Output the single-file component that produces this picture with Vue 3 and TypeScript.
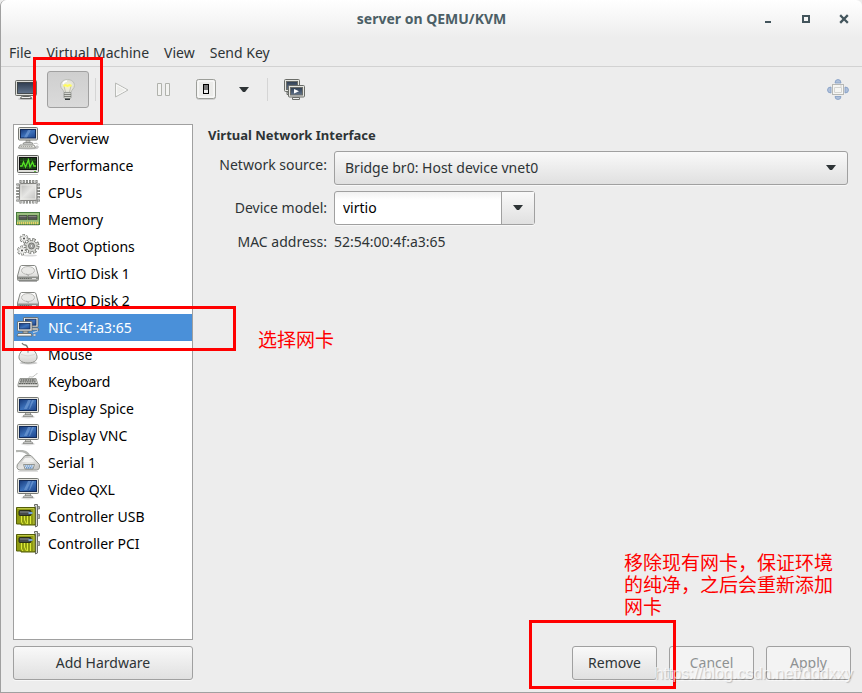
<script setup lang="ts">
import { ref } from 'vue'

interface Device {
  label: string
  icon: string
}

const menus: string[] = ['File', 'Virtual Machine', 'View', 'Send Key']

const devices: Device[] = [
  { label: 'Overview', icon: 'computer' },
  { label: 'Performance', icon: 'performance' },
  { label: 'CPUs', icon: 'cpu' },
  { label: 'Memory', icon: 'memory' },
  { label: 'Boot Options', icon: 'gears' },
  { label: 'VirtIO Disk 1', icon: 'disk' },
  { label: 'VirtIO Disk 2', icon: 'disk' },
  { label: 'NIC :4f:a3:65', icon: 'network' },
  { label: 'Mouse', icon: 'mouse' },
  { label: 'Keyboard', icon: 'keyboard' },
  { label: 'Display Spice', icon: 'display' },
  { label: 'Display VNC', icon: 'display' },
  { label: 'Serial 1', icon: 'serial' },
  { label: 'Video QXL', icon: 'display' },
  { label: 'Controller USB', icon: 'card' },
  { label: 'Controller PCI', icon: 'card' },
]

const selected = ref(7)
const source = ref('Bridge br0: Host device vnet0')
const model = ref('virtio')
</script>

<template>
  <div class="window">
    <svg class="sprite" width="0" height="0" aria-hidden="true">
      <defs>
        <linearGradient id="g-blue" x1="0" y1="0" x2="1" y2="1">
          <stop offset="0" stop-color="#16397a" />
          <stop offset="0.5" stop-color="#3d72bb" />
          <stop offset="1" stop-color="#1b438a" />
        </linearGradient>
        <linearGradient id="g-slate" x1="0" y1="0" x2="0" y2="1">
          <stop offset="0" stop-color="#2f3d50" />
          <stop offset="1" stop-color="#62748c" />
        </linearGradient>
        <linearGradient id="g-metal" x1="0" y1="0" x2="1" y2="1">
          <stop offset="0" stop-color="#b4b4b2" />
          <stop offset="0.5" stop-color="#e6e6e4" />
          <stop offset="1" stop-color="#bcbcba" />
        </linearGradient>
        <linearGradient id="g-light" x1="0" y1="0" x2="0" y2="1">
          <stop offset="0" stop-color="#ffffff" />
          <stop offset="1" stop-color="#d0d0cd" />
        </linearGradient>
        <radialGradient id="g-bulb">
          <stop offset="0" stop-color="#f8f5bd" />
          <stop offset="0.6" stop-color="#eae9d8" />
          <stop offset="1" stop-color="#dcdcda" />
        </radialGradient>
      </defs>

      <symbol id="display" viewBox="0 0 24 24">
        <ellipse cx="12" cy="21" rx="7" ry="1.5" fill="#000" opacity="0.12" />
        <path d="M10 16h4l1 3H9z" fill="#c8c8c4" stroke="#777974" stroke-width="0.7" />
        <path d="M7 20.5q0-1.5 2-1.5h6q2 0 2 1.5z" fill="#eee" stroke="#777974" stroke-width="0.7" />
        <rect x="1.5" y="1.5" width="21" height="15" rx="1" fill="#e4e4df" stroke="#777974" />
        <rect x="3.5" y="3.5" width="17" height="11" fill="url(#g-blue)" stroke="#122a58" />
        <path d="M12 4h3l-4 9H8zM16 4h2l-4 9h-1z" fill="#8fb4e5" opacity="0.45" />
      </symbol>

      <symbol id="computer" viewBox="0 0 24 24">
        <ellipse cx="12" cy="22.5" rx="10" ry="1.2" fill="#000" opacity="0.15" />
        <path d="M10 14h4v3h-4z" fill="#c8c8c4" stroke="#888" stroke-width="0.6" />
        <path d="M7 18q0-1.5 2-1.5h6q2 0 2 1.5z" fill="#eee" stroke="#777974" stroke-width="0.7" />
        <rect x="2.5" y="1.5" width="19" height="12.500" rx="1" fill="#e4e4df" stroke="#777974" />
        <rect x="4.5" y="3.5" width="15" height="8.500" fill="url(#g-blue)" stroke="#122a58" />
        <path d="M12 4h3l-4 7.5H8z" fill="#8fb4e5" opacity="0.45" />
        <path d="M4 19h14l1.5 3h-17z" fill="#f3f3ef" stroke="#777974" stroke-width="0.8" />
        <path d="M4.5 20.500h12.500" stroke="#a5a5a0" stroke-dasharray="1.5 0.6" />
        <path d="M18 17.500q4-1 4 1" fill="none" stroke="#aaa" stroke-width="0.7" />
        <ellipse cx="21" cy="21" rx="1.4" ry="1" fill="#fff" stroke="#888" stroke-width="0.6" />
      </symbol>

      <symbol id="performance" viewBox="0 0 24 24">
        <path d="M2 21.500h20" stroke="#000" opacity="0.2" />
        <rect x="1.5" y="2.5" width="21" height="17" rx="1" fill="#deded9" stroke="#5c5e5a" />
        <rect x="3.5" y="4.5" width="17" height="12" fill="#173d12" stroke="#111" />
        <path d="M4 7.5h16M4 10.5h16M4 13.5h16M7.5 5v11M11.5 5v11M15.5 5v11" stroke="#2f6126" stroke-width="0.5" />
        <path d="M4 13h2l1.500-4 2 5 3-7 1.500 7 2.500-5 1.500 4H20" fill="none" stroke="#55e324" stroke-width="1.3" />
        <path d="M18 18.5h2" stroke="#67bd46" />
      </symbol>

      <symbol id="cpu" viewBox="0 0 24 24">
        <path d="M3.500 1.5h18M3.500 22h18" stroke="#6c6e6a" stroke-width="3" stroke-dasharray="2 1.2" />
        <path d="M1.8 3.500v18M22.5 3.500v18" stroke="#6c6e6a" stroke-width="3" stroke-dasharray="2 1.2" />
        <path d="M4.200 1.5h17M4.200 22h17" stroke="#d0d1ce" stroke-width="2" stroke-dasharray="0.700 2.500" />
        <path d="M1.8 4.200v17M22.5 4.200v17" stroke="#d0d1ce" stroke-width="2" stroke-dasharray="0.700 2.500" />
        <rect x="3.5" y="3.5" width="17.5" height="17" rx="1" fill="url(#g-metal)" stroke="#858582" />
        <rect x="5" y="5" width="14.5" height="14" fill="none" stroke="#efefec" stroke-width="0.7" />
      </symbol>

      <symbol id="memory" viewBox="0 0 24 24">
        <rect x="0.5" y="5.5" width="23" height="12" fill="#7eaa62" stroke="#477b3c" />
        <path d="M1 7h22" stroke="#b8d39b" />
        <path d="M3 8.500h8v4H3zM12 8.500h9v4h-9z" fill="#555753" stroke="#32362f" stroke-width="0.5" />
        <path d="M3.5 9.500h7M12.5 9.500h8" stroke="#81837e" />
        <path d="M1 14h22" stroke="#a8cd90" />
        <path d="M1 16h22" stroke="#e7d367" stroke-width="2.5" stroke-dasharray="1.3 0.7" />
        <path d="M1 18.500h22" stroke="#000" opacity="0.15" />
      </symbol>

      <symbol id="gears" viewBox="0 0 24 24">
        <ellipse cx="14" cy="21.5" rx="7" ry="1" fill="#000" opacity="0.15" />
        <g fill="none">
          <circle cx="15.5" cy="12" r="6" stroke="#6e706b" stroke-width="4" stroke-dasharray="3 1.712" />
          <circle cx="15.5" cy="12" r="5.5" fill="#d8d9d5" stroke="#6e706b" stroke-width="0.8" />
          <circle cx="15.5" cy="12" r="5.800" stroke="#d8d9d5" stroke-width="3" stroke-dasharray="1.600 2.955" stroke-dashoffset="-0.700" />
          <circle cx="8" cy="4.500" r="3" stroke="#6e706b" stroke-width="3" stroke-dasharray="2 1.140" />
          <circle cx="8" cy="4.500" r="2.800" fill="#f4f4f2" stroke="#8a8c87" stroke-width="0.5" />
          <circle cx="8" cy="4.500" r="3" stroke="#f4f4f2" stroke-width="1.800" stroke-dasharray="1 2.140" stroke-dashoffset="-0.500" />
          <circle cx="6" cy="16.5" r="3.300" stroke="#6e706b" stroke-width="3.200" stroke-dasharray="2.200 1.255" />
          <circle cx="6" cy="16.5" r="3" fill="#f4f4f2" stroke="#8a8c87" stroke-width="0.5" />
          <circle cx="6" cy="16.5" r="3.300" stroke="#f4f4f2" stroke-width="2" stroke-dasharray="1.200 2.255" stroke-dashoffset="-0.500" />
        </g>
        <circle cx="15.5" cy="12" r="3" fill="#aaaca7" stroke="#555" stroke-width="0.7" />
        <circle cx="15.5" cy="12" r="1.2" fill="#fff" stroke="#666" stroke-width="0.5" />
        <circle cx="8" cy="4.500" r="0.900" fill="#333" />
        <circle cx="6" cy="16.5" r="0.900" fill="#333" />
      </symbol>

      <symbol id="disk" viewBox="0 0 24 24">
        <path d="M5.5 4.500h13q1 0 1.500 1.500l2.500 9v3.500q0 1-1 1h-19q-1 0-1-1V15L4 6q0.500-1.500 1.500-1.500z" fill="url(#g-light)" stroke="#868884" />
        <path d="M2 15.5h20v3H2z" fill="#8e908c" />
        <ellipse cx="12" cy="9.5" rx="6.5" ry="4" fill="#e9e9e7" stroke="#babab7" />
        <path d="M10 13l3 2" stroke="#aaa" />
        <path d="M4 17.5h9" stroke="#6a6c68" stroke-dasharray="1 1" />
        <path d="M16 17.5h4" stroke="#dedede" />
        <path d="M3 20.5h18" stroke="#000" opacity="0.3" />
      </symbol>

      <symbol id="network" viewBox="0 0 24 24">
        <g stroke="#60625e" stroke-width="0.8">
          <path d="M13 13h9l1 2h-10z" fill="#f1f1ed" />
          <rect x="7.5" y="2.5" width="14.5" height="9.5" rx="0.5" fill="#eeeeea" />
          <rect x="9.5" y="4.200" width="10.5" height="6" fill="url(#g-blue)" stroke="#142d5c" />
          <path d="M7 16h5v2H7z" fill="#ddd" />
          <path d="M2 18.500h13l1 2.500H1z" fill="#f6f6f2" />
          <rect x="1.5" y="6.5" width="14.5" height="9.5" rx="0.5" fill="#eeeeea" />
          <rect x="3.5" y="8.5" width="10.5" height="5.5" fill="url(#g-blue)" stroke="#142d5c" />
        </g>
        <path d="M17 17.5q5-1 5-2" stroke="#ddd" fill="none" />
        <ellipse cx="18.5" cy="20" rx="1.5" ry="1" fill="#eee" stroke="#777" stroke-width="0.5" />
      </symbol>

      <symbol id="mouse" viewBox="0 0 24 24">
        <ellipse cx="12.5" cy="21" rx="9" ry="1.5" fill="#000" opacity="0.2" />
        <path d="M6 1q1 2 3 2t3 4" fill="none" stroke="#777974" stroke-width="1.3" />
        <path d="M12 6.500c4 0 7 2 8.500 6 2 5-1.500 8.500-8.500 8.500S1.500 17.500 3.500 12.500C5 8.500 8 6.500 12 6.500z" fill="url(#g-light)" stroke="#8e908b" />
        <path d="M5 12.500q7 3 14 0" stroke="#d2d2ce" fill="none" stroke-width="0.8" />
        <ellipse cx="12" cy="9.500" rx="1" ry="1.800" fill="#bbb" />
      </symbol>

      <symbol id="keyboard" viewBox="0 0 24 24">
        <path d="M13 10c0-5 2 0 5-3s3-1 3-3" fill="none" stroke="#b9bab7" stroke-width="0.9" />
        <path d="M4 9.500h16l2 6v2h-20v-2z" fill="#e0e0dd" stroke="#8c8e89" stroke-width="0.9" />
        <path d="M4.5 11h15M4 12.800h16M3 14.600h18" stroke="#5e605c" stroke-width="1.3" stroke-dasharray="1.9 0.4" />
        <path d="M2 18h20" stroke="#000" opacity="0.2" />
      </symbol>

      <symbol id="serial" viewBox="0 0 24 24">
        <path d="M0 1c8-1 13 2 13 6" fill="none" stroke="#b4b6b2" stroke-width="2.300" />
        <path d="M9 5.500h6l7 7.500q2 1 1.500 4.500-0.500 2.500-3 2.500H4q-2.500 0-3-2.500Q0.500 14.500 3 12.500z" fill="url(#g-metal)" stroke="#92948f" />
        <path d="M9 8h6l3 4H6z" fill="#f2f2f0" />
        <path d="M7.500 14.500h11l-1.500 4.500H9z" fill="#dce5ee" stroke="#7e817c" stroke-width="0.8" />
        <path d="M9 16h8M10 17.800h6.500" stroke="#4b83c3" stroke-width="1.2" stroke-dasharray="1.3 0.6" />
        <path d="M2 21.500h20" stroke="#000" opacity="0.12" />
      </symbol>

      <symbol id="card" viewBox="0 0 24 24">
        <path d="M18.500 2V0.500h3V22l-2 1V3z" fill="#d3d5d0" stroke="#6a6c67" />
        <path d="M21.500 2.500h2v2.500h-2zM21.500 10.500h2v4h-2z" fill="#b2b4af" stroke="#6a6c67" stroke-width="0.7" />
        <path d="M0.5 3.500h18.500v17.500h-14v-1h-4.500z" fill="#8e9a12" stroke="#535d08" />
        <path d="M1.5 4.500h16.500v15.500" stroke="#bdc646" fill="none" />
        <path d="M5.5 12v6l1.500 2M8.5 12v4l2 4M11.500 12v8M14.5 12v8" stroke="#dcea38" stroke-width="1" fill="none" />
        <rect x="3" y="6.500" width="12" height="5" rx="1" fill="#45494b" stroke="#282e17" />
        <path d="M4 8h9" stroke="#84898b" />
        <path d="M12.500 9h4" stroke="#74a2d4" stroke-width="2" />
      </symbol>

      <symbol id="console" viewBox="0 0 24 24">
        <ellipse cx="12" cy="21" rx="8" ry="1" fill="#000" opacity="0.2" />
        <path d="M10 17h4v2h-4z" fill="#999" />
        <path d="M6.5 20.500q0-2 2-2h7q2 0 2 2z" fill="#f2f2ef" stroke="#555753" stroke-width="0.9" />
        <rect x="1.5" y="2.500" width="21" height="15" rx="1" fill="#ddded9" stroke="#6a6c68" />
        <rect x="3.5" y="4.500" width="17" height="11" fill="url(#g-slate)" stroke="#2e3436" stroke-width="0.8" />
      </symbol>

      <symbol id="bulb" viewBox="0 0 24 24">
        <path d="M11.500 1.500c4 0 7 2.500 7 6 0 3-3 4-3.500 7H8c-0.500-3-3.500-4-3.500-7 0-3.500 3-6 7-6z" fill="url(#g-bulb)" stroke="#bcbeb8" />
        <path d="M7 6q1-3 4-3" fill="none" stroke="#fff" stroke-width="1.300" />
        <path d="M9.500 14L8 8M13.500 14l1.500-6" fill="none" stroke="#b9b9aa" stroke-width="0.8" />
        <path d="M7.500 8l2-1 2 1 2-1 2 1" fill="none" stroke="#fffb5c" stroke-width="2" />
        <path d="M8 14.500h7v5l-1.500 1.500h-4L8 19.500z" fill="#d4d6d1" stroke="#8c8e89" stroke-width="0.8" />
        <path d="M8 16.500h7M8 18.500h7" stroke="#777974" stroke-width="0.9" />
        <path d="M9 20.500h5v1.500H9z" fill="#2e3436" />
      </symbol>

      <symbol id="play" viewBox="0 0 24 24">
        <path d="M5.500 5v14L18 12z" fill="#ededea" stroke="#b9bbb7" stroke-linejoin="round" />
        <path d="M6.700 7v10L16 12z" fill="none" stroke="#fafafa" />
      </symbol>

      <symbol id="pause" viewBox="0 0 24 24">
        <path d="M5.500 5.500h4v12h-4zM13.500 5.500h4v12h-4z" fill="#f3f3f1" stroke="#b0b2ac" />
      </symbol>

      <symbol id="power" viewBox="0 0 24 24">
        <rect x="2.5" y="2.5" width="19" height="19" rx="2" fill="none" stroke="#000" opacity="0.12" />
        <rect x="2.5" y="1.5" width="19" height="19" rx="2" fill="#ececea" stroke="#9c9e99" />
        <rect x="4" y="3" width="16" height="16" rx="1" fill="none" stroke="#fff" />
        <rect x="9.5" y="6.5" width="5" height="9" fill="#eee" stroke="#000" />
        <path d="M10 7h4v5h-4z" fill="#777" />
      </symbol>

      <symbol id="arrow" viewBox="0 0 10 6">
        <path d="M0 0h10L6 5H4z" fill="#2e3436" />
      </symbol>

      <symbol id="snapshots" viewBox="0 0 24 24">
        <g stroke="#6a6c68">
          <path d="M5 14h6v2.500H5z" fill="#ddd" />
          <rect x="2.500" y="1.500" width="15" height="12" rx="1" fill="#e4e5e1" />
          <rect x="4.500" y="3.500" width="11" height="8" fill="url(#g-slate)" />
          <path d="M10.5 21.500v-2h7v2z" fill="#eee" />
          <rect x="6.500" y="7.500" width="16" height="11.500" rx="1" fill="#e4e5e1" />
          <rect x="8.500" y="9.500" width="12" height="7.500" fill="url(#g-slate)" />
        </g>
        <path d="M12 11v4.500l5-2.250z" fill="#fff" />
      </symbol>

      <symbol id="fullscreen" viewBox="0 0 24 24">
        <rect x="6.5" y="6.5" width="11" height="10" fill="#f6f6f4" stroke="#b7b8b5" />
        <path d="M8.5 9.500h7v5h-7zM14 8h2" fill="none" stroke="#d4d5d2" />
        <g fill="#afc0da" stroke="#809cc4" stroke-width="0.8">
          <path d="M9 5q0-3.500 3-3.500T15 5zM9 18.500q0 3 3 3t3-3zM5 9Q1.500 9 1.500 12T5 15zM19 9q3.500 0 3.500 3T19 15z" />
        </g>
      </symbol>
    </svg>

    <header class="titlebar">
      <h1>server on QEMU/KVM</h1>
      <div class="controls">
        <button type="button" aria-label="Minimize">
          <svg width="10" height="10" viewBox="0 0 10 10"><path d="M2 7h6v2H2z" fill="#43555c" /></svg>
        </button>
        <button type="button" aria-label="Maximize">
          <svg width="10" height="10" viewBox="0 0 10 10"><path d="M2 2h6v6H2z" fill="none" stroke="#43555c" stroke-width="2" /></svg>
        </button>
        <button type="button" aria-label="Close">
          <svg width="10" height="10" viewBox="0 0 10 10"><path d="M2 2l6 6M8 2L2 8" stroke="#43555c" stroke-width="2.3" stroke-linecap="square" /></svg>
        </button>
      </div>
    </header>

    <nav class="menubar">
      <button v-for="menu in menus" :key="menu" type="button">{{ menu }}</button>
    </nav>

    <div class="toolbar" role="toolbar">
      <button type="button" aria-label="Console"><svg class="icon"><use href="#console" /></svg></button>
      <button type="button" class="pressed" aria-label="Details" aria-pressed="true"><svg class="icon"><use href="#bulb" /></svg></button>
      <span class="separator"></span>
      <button type="button" aria-label="Run" disabled><svg class="icon"><use href="#play" /></svg></button>
      <button type="button" aria-label="Pause"><svg class="icon"><use href="#pause" /></svg></button>
      <button type="button" aria-label="Shut down"><svg class="icon"><use href="#power" /></svg></button>
      <button type="button" class="narrow" aria-label="Shut down options"><svg class="arrow"><use href="#arrow" /></svg></button>
      <span class="separator"></span>
      <button type="button" aria-label="Snapshots"><svg class="icon"><use href="#snapshots" /></svg></button>
      <button type="button" class="last" aria-label="Fullscreen"><svg class="icon"><use href="#fullscreen" /></svg></button>
    </div>

    <main class="content">
      <aside class="sidebar">
        <ul class="devices">
          <li v-for="(device, index) in devices" :key="device.label">
            <button type="button" :class="{ selected: index === selected }" @click="selected = index">
              <svg class="icon"><use :href="'#' + device.icon" /></svg>
              <span>{{ device.label }}</span>
            </button>
          </li>
        </ul>
        <button type="button" class="btn">Add Hardware</button>
      </aside>

      <section class="details">
        <h2>Virtual Network Interface</h2>
        <div class="form">
          <label class="source-label" for="source">Network source:</label>
          <div class="combo">
            <select id="source" v-model="source">
              <option>Bridge br0: Host device vnet0</option>
            </select>
            <svg class="arrow"><use href="#arrow" /></svg>
          </div>
          <label for="model">Device model:</label>
          <div class="entry">
            <input id="model" v-model="model" type="text" />
            <button type="button" aria-label="Choose device model"><svg class="arrow"><use href="#arrow" /></svg></button>
          </div>
          <span>MAC address:</span>
          <span class="mac">52:54:00:4f:a3:65</span>
        </div>
        <div class="actions">
          <button type="button" class="btn">Remove</button>
          <button type="button" class="btn" disabled>Cancel</button>
          <button type="button" class="btn" disabled>Apply</button>
        </div>
      </section>
    </main>

    <div class="mark mark-details"></div>
    <div class="mark mark-nic"></div>
    <div class="mark mark-remove"></div>
    <p class="note note-nic">选择网卡</p>
    <p class="note note-remove">移除现有网卡，保证环境的纯净，之后会重新添加网卡</p>
    <span class="watermark">https://blog.csdn.net/dddxxy</span>
  </div>
</template>

<style>
body {
  background: #ededed;
}
</style>

<style scoped>
.window {
  position: relative;
  box-sizing: border-box;
  display: flex;
  flex-direction: column;
  min-height: 100vh;
  border: solid #a0a0a0;
  border-width: 0 0 1px 1px;
  border-radius: 6px 6px 0 0;
  background: #ededed;
  color: #2e3436;
  font: 14px/20px "Noto Sans", "Open Sans", sans-serif;
}

.sprite {
  position: absolute;
}

button,
input,
select {
  box-sizing: border-box;
  margin: 0;
  padding: 0;
  border: 0;
  background: none;
  color: inherit;
  font: inherit;
}

svg {
  display: block;
}

.icon {
  width: 24px;
  height: 24px;
  flex: none;
}

.arrow {
  width: 10px;
  height: 6px;
}

.titlebar {
  display: grid;
  grid-template-columns: 1fr auto 1fr;
  align-items: center;
  height: 38px;
  border-radius: 6px 6px 0 0;
  background: linear-gradient(#fff, #ededed);
}

.titlebar h1 {
  grid-column: 2;
  margin: 0;
  color: #4c5f66;
  font-size: 14px;
  line-height: 20px;
}

.controls {
  display: flex;
  justify-content: flex-end;
  gap: 28px;
  padding-right: 13px;
}

.menubar {
  display: flex;
  gap: 15px;
  height: 26px;
  padding: 2px 0 0 8px;
  border-bottom: 1px solid #d2d2d2;
}

.menubar button {
  height: 26px;
}

.toolbar {
  display: flex;
  align-items: center;
  height: 45px;
  padding: 0 3px 0 4px;
}

.toolbar button {
  display: grid;
  place-items: center;
  width: 42px;
  height: 37px;
}

.toolbar .narrow {
  width: 34px;
}

.toolbar .last {
  margin-left: auto;
}

.toolbar .pressed {
  border: 1px solid #a0a0a0;
  border-radius: 3px;
  background: linear-gradient(#cfcfcf, #dadada);
}

.separator {
  width: 1px;
  height: 23px;
  margin: 0 5px 0 6px;
  background: #d5d5d5;
}

.content {
  flex: 1;
  display: flex;
  gap: 15px;
  padding: 12px 11px 12px 12px;
}

.sidebar {
  flex: none;
  display: flex;
  flex-direction: column;
  gap: 6px;
  width: 180px;
}

.devices {
  flex: 1;
  margin: 0;
  padding: 0;
  border: 1px solid #a0a0a0;
  background: #fff;
  color: #000;
  list-style: none;
}

.devices button {
  display: flex;
  align-items: center;
  gap: 8px;
  width: 100%;
  height: 27px;
  padding-left: 2px;
  text-align: left;
}

.devices .icon {
  margin-bottom: 1px;
}

.devices .selected {
  background: #4a90d9;
  color: #fff;
}

.btn {
  height: 34px;
  border: 1px solid #a0a0a0;
  border-radius: 3px;
  background: linear-gradient(#f9f9f9, #e0e0e0);
  box-shadow: 0 1px #f8f8f8;
}

.btn:disabled {
  background: #f3f3f3;
  color: #8e9192;
}

.details {
  flex: 1;
  display: flex;
  flex-direction: column;
}

.details h2 {
  margin: 0;
  font-size: 13px;
  line-height: 22px;
}

.form {
  display: grid;
  grid-template-columns: 119px 1fr;
  grid-template-rows: 34px 34px 22px;
  align-items: center;
  gap: 6px 7px;
  margin-top: 5px;
  padding-right: 3px;
}

.form > label,
.form > span:not(.mac) {
  text-align: right;
}

.form .source-label {
  align-self: start;
  padding-top: 4px;
}

.combo,
.entry {
  height: 34px;
  box-sizing: border-box;
  border: 1px solid #a0a0a0;
  border-radius: 3px;
  box-shadow: 0 1px #f8f8f8;
}

.combo {
  display: grid;
  grid-template-columns: 1fr 10px 11px;
  align-items: center;
  background: linear-gradient(#f9f9f9, #e0e0e0);
}

.combo select {
  grid-area: 1 / 1 / 2 / 4;
  height: 32px;
  padding-left: 10px;
  appearance: none;
}

.combo .arrow {
  grid-area: 1 / 2;
  pointer-events: none;
}

.entry {
  display: flex;
  width: 201px;
  background: linear-gradient(#f1f1f1, #fff 8px);
  color: #000;
}

.entry input {
  flex: 1;
  min-width: 0;
  padding-left: 8px;
}

.entry button {
  display: grid;
  place-items: center;
  width: 33px;
  border-left: 1px solid #a0a0a0;
  background: linear-gradient(#f9f9f9, #e0e0e0);
}

.actions {
  display: flex;
  justify-content: flex-end;
  gap: 12px;
  margin-top: auto;
}

.actions .btn {
  width: 85px;
}

.mark {
  position: absolute;
  box-sizing: border-box;
  border: 3px solid #f00;
  pointer-events: none;
}

.mark-details {
  top: 57px;
  left: 32px;
  width: 70px;
  height: 68px;
}

.mark-nic {
  top: 306px;
  left: 1px;
  width: 234px;
  height: 45px;
}

.mark-remove {
  right: 186px;
  bottom: 3px;
  width: 147px;
  height: 69px;
}

.note {
  position: absolute;
  margin: 0;
  color: #f00;
  font: 19px/22px "Noto Sans CJK SC", sans-serif;
}

.note-nic {
  top: 328px;
  left: 257px;
}

.note-remove {
  right: 26px;
  bottom: 75px;
  width: 212px;
}

.watermark {
  position: absolute;
  right: 9px;
  bottom: 8px;
  color: rgba(255, 255, 255, 0.7);
  font: 16px/20px "Liberation Sans", sans-serif;
  text-shadow: 1px 1px 1px rgba(0, 0, 0, 0.2);
  pointer-events: none;
}
</style>
